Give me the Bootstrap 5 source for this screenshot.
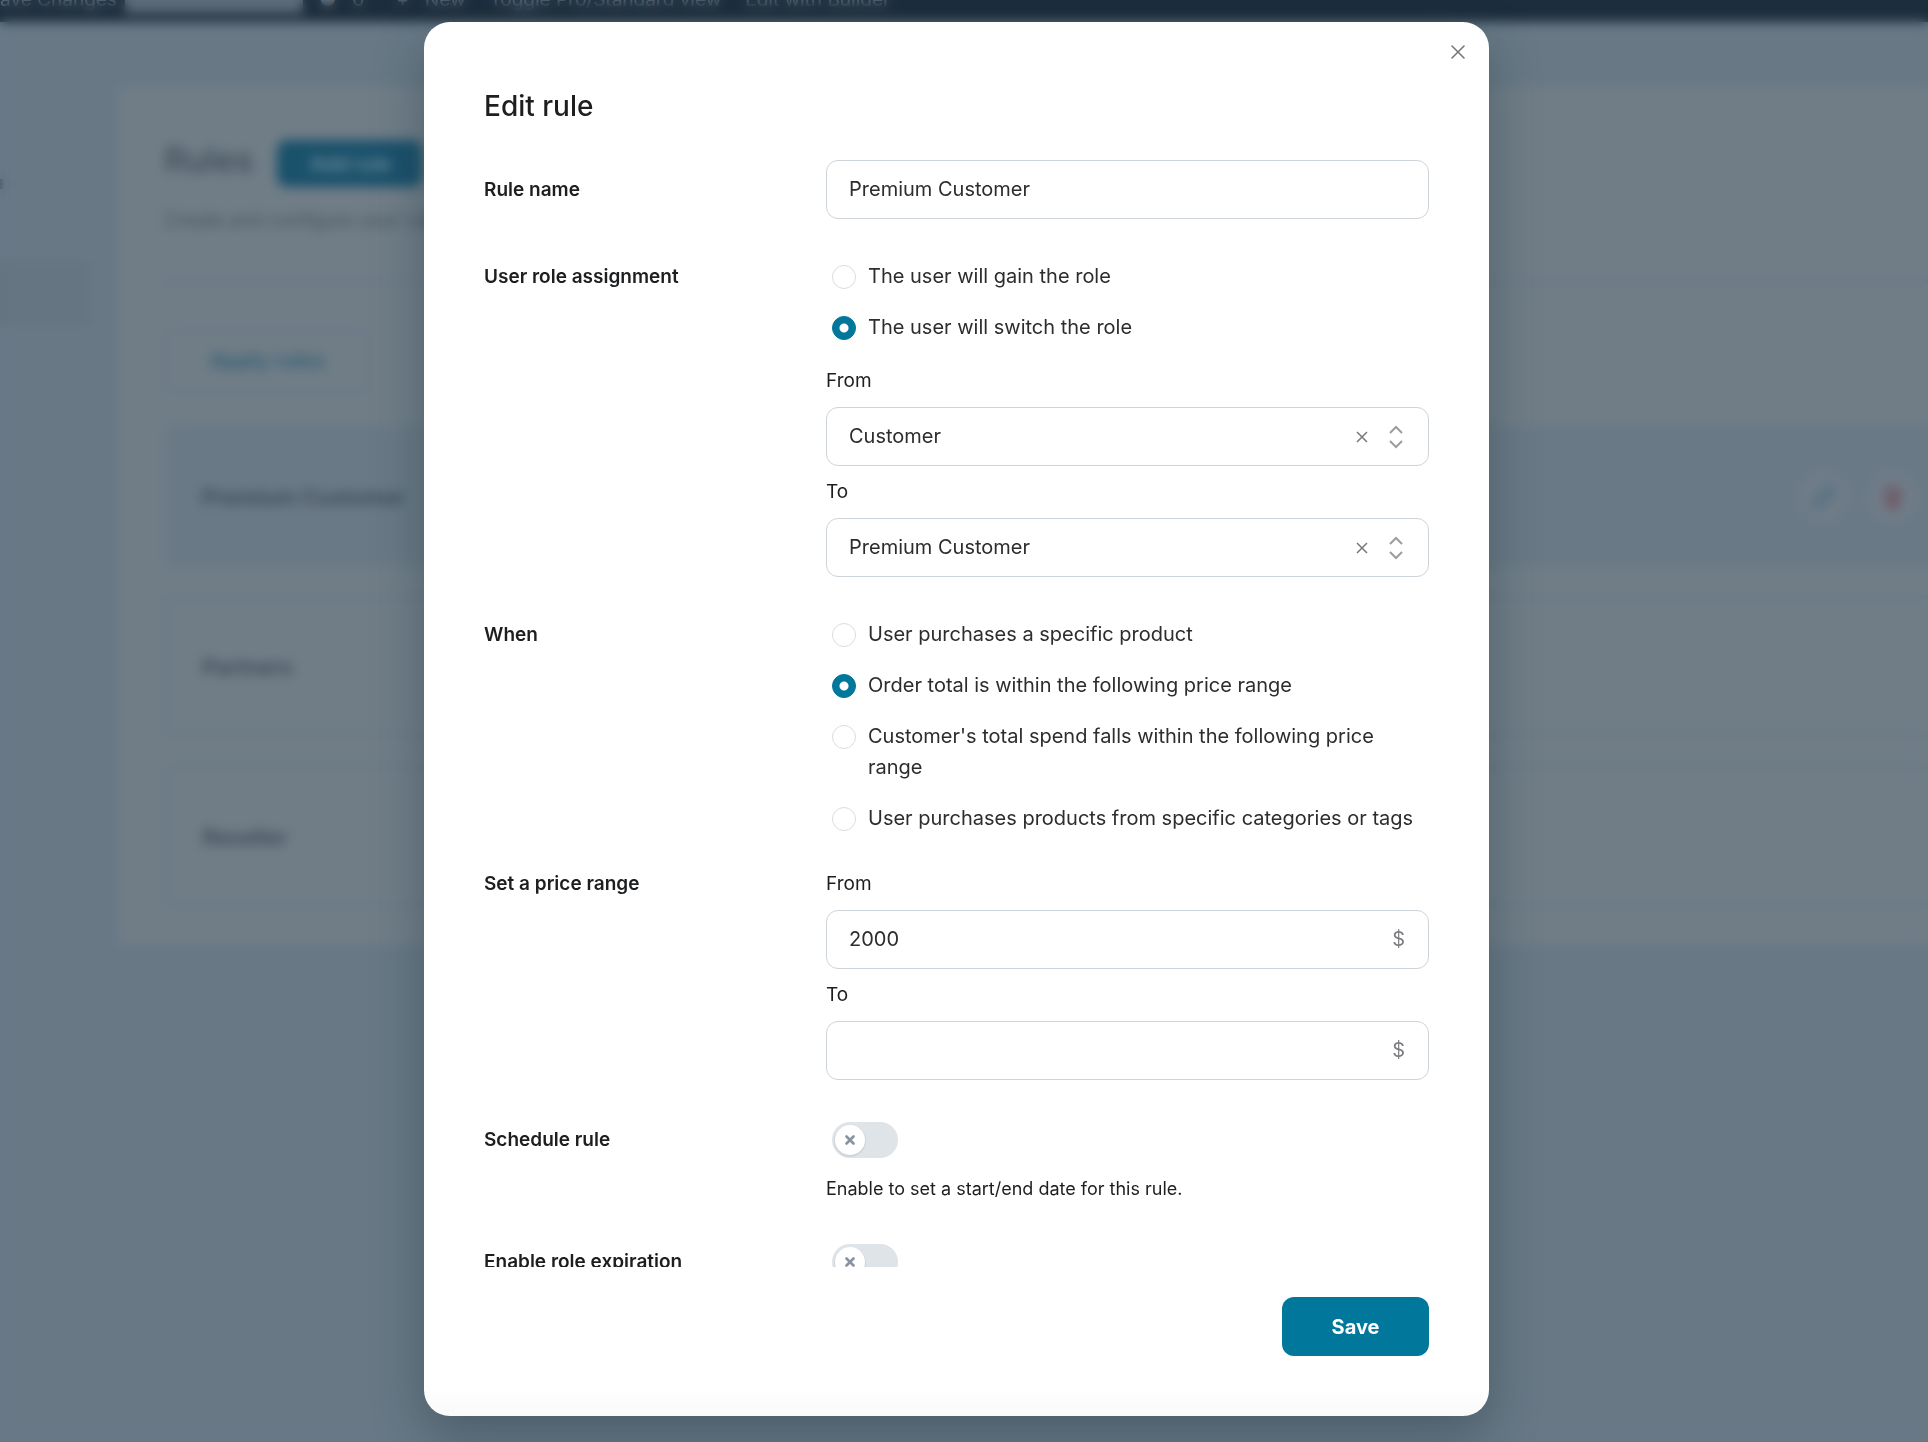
<!DOCTYPE html>
<html lang="en">
<head>
<meta charset="utf-8">
<meta name="viewport" content="width=device-width, initial-scale=1">
<title>Edit rule</title>
<link href="https://cdn.jsdelivr.net/npm/bootstrap@5.3.0/dist/css/bootstrap.min.css" rel="stylesheet">
<style>
  :root { --brand: #00779b; --line: #cdd4d9; --ink: #2c2d2f; --ink-strong: #1d1e20; }
  body { font-family: Inter, "Liberation Sans", sans-serif; font-size: 20px; line-height: 31px; color: var(--ink); background: #687885; }

  /* Page behind the dialog */
  .page { height: 100vh; overflow: hidden; }
  .adminbar { height: 46px; margin-top: -24px; background: #1d2d3c; color: #6b7b88; font-size: 19px; white-space: nowrap; }
  .adminbar .pill { width: 178px; height: 28px; background: #5c6b78; color: #7d8b97; }
  .side { width: 118px; padding-top: 145px; }
  .side .hit { width: 90px; height: 64px; margin-top: 72px; background: #657581; }
  .side .dot { width: 3px; height: 10px; margin-top: 12px; background: #4a5966; }
  .panel { margin-top: 64px; padding: 54px 0 38px 46px; background: #707d87; }
  .panel h1 { font-size: 34px; line-height: 40px; font-weight: 500; color: #3f4d59; }
  .btn-add { width: 146px; height: 47px; background: #1a516b; color: #6b8c9d; font-size: 20px; font-weight: 600; border-radius: 10px; }
  .panel .desc { font-size: 19px; line-height: 28px; color: #465460; }
  .panel .rule-line { height: 4px; margin: 44px 0 46px; background: #6b7986; }
  .btn-apply { width: 206px; height: 64px; border: 3px solid #697a86; color: #345f73; font-size: 21px; font-weight: 600; border-radius: 10px; }
  .rule-card { height: 142px; padding: 2px 8px 0 34px; border: 4px solid #6a7a86; border-right: 0; border-radius: 12px 0 0 12px; color: #3c4955; font-size: 22px; font-weight: 600; }
  .rule-card.on { background: #697985; }
  .rule-card .round { width: 54px; height: 54px; border-radius: 50%; background: #6f7c88; }

  .veil { position: fixed; inset: 0; backdrop-filter: blur(6px); }
  .dialog-area { padding: 22px 15px 26px 0; }
  .dialog-area .modal-dialog { width: 1065px; max-width: 100%; height: 100%; margin: 0 auto; }
  .dialog-area .modal-content { height: 100%; border: 0; border-radius: 26px; color: var(--ink); background: linear-gradient(#fff calc(100% - 30px), #fafafa); box-shadow: 0 20px 50px rgba(30, 55, 65, .4); }
  .modal-header { padding: 66px 60px 36px; border: 0; }
  .modal-title { font-size: 28px; line-height: 36px; font-weight: 500; color: var(--ink-strong); }
  .close-x { position: absolute; top: 16px; right: 17px; width: 28px; height: 28px; }
  .dialog-area .modal-body { padding: 0 60px; overflow-y: auto; scrollbar-width: none; }
  .modal-body::-webkit-scrollbar { display: none; }
  .modal-footer { padding: 30px 60px 60px; border: 0; }
  .modal-footer > * { margin: 0; }

  .form-line { margin-bottom: 42px; }
  .form-line.tight { margin-bottom: 24px; }
  .line-label { flex: 0 0 342px; font-size: 19px; font-weight: 600; color: var(--ink-strong); }
  .line-label.tall { line-height: 59px; }
  .line-label.mid { line-height: 52px; }
  .line-label.sw { line-height: 36px; }
  .sub-label { display: block; font-size: 19px; line-height: 52px; color: var(--ink-strong); }

  .box { height: 59px; padding: 0 20px 0 22px; border: 1px solid var(--line); border-radius: 12px; background: #fff; }
  .box .form-control, .box .form-select { padding: 0; border: 0; box-shadow: none; background: none; font-size: 20px; line-height: 31px; color: var(--ink); }
  .box .unit { padding-right: 3px; color: #7b7d80; }
  .icon-btn { display: flex; align-items: center; justify-content: center; padding: 0; border: 0; background: none; color: #76787b; }
  .box .icon-btn { width: 24px; height: 24px; margin-right: 16px; }
  .box .updown { margin-right: 5px; }

  .opt { display: flex; gap: 12px; padding: 0 0 0 6px; margin: 0 0 20px; min-height: 0; }
  .opt:last-child { margin-bottom: 0; }
  .opt .form-check-input { flex: none; float: none; width: 24px; height: 24px; margin: 4px 0 0; border-color: #dadcde; }
  .opt .form-check-input:checked { background-color: var(--brand); border-color: var(--brand); background-image: radial-gradient(circle, #fff 4px, transparent 5px); }
  .sub-fields { padding-top: 12px; }

  .switch { padding: 0 0 0 6px; margin: 0; min-height: 36px; }
  .form-switch.switch .form-check-input { float: none; display: block; width: 66px; height: 36px; margin: 0; border: 0; border-radius: 18px; background-color: #dfe4e8; background-size: 36px 36px; background-position: left center;
    background-image: url("data:image/svg+xml,%3csvg xmlns='http://www.w3.org/2000/svg' viewBox='0 0 36 36'%3e%3ccircle cx='18' cy='19' r='16' fill='%23d0d6db'/%3e%3ccircle cx='18' cy='18' r='15' fill='%23fff'/%3e%3cpath d='M14.5 14.5l7 7m0-7l-7 7' stroke='%238793a0' stroke-width='2.6' stroke-linecap='round'/%3e%3c/svg%3e"); }
  .help { margin: 18px 0 0; font-size: 18px; line-height: 26px; color: var(--ink-strong); }
  .btn-save { width: 147px; height: 59px; border: 0; border-radius: 12px; background: var(--brand); color: #fff; font-size: 20px; font-weight: 700; }
  .btn-save:hover { background: #00678a; color: #fff; }
</style>
<script src="https://cdn.jsdelivr.net/npm/bootstrap@5.3.0/dist/js/bootstrap.bundle.min.js"></script>
</head>
<body>

<div class="page" aria-hidden="true">
  <div class="adminbar d-flex align-items-center">
    <span>ave Changes</span><span class="pill ms-2"></span>
    <span class="ms-3">●</span><span class="ms-3">0</span><span class="ms-4 ps-2">+</span><span class="ms-3">New</span>
    <span class="ms-4">Toggle Pro/Standard view</span><span class="ms-4">Edit with Builder</span>
  </div>
  <div class="d-flex align-items-start">
    <div class="side flex-shrink-0"><div class="dot"></div><div class="hit"></div></div>
    <main class="panel flex-grow-1">
      <div class="d-flex align-items-start">
        <h1 class="m-0 me-4">Rules</h1>
        <button type="button" class="btn btn-add" tabindex="-1">Add rule</button>
      </div>
      <p class="desc mt-3 pt-1 mb-0">Create and configure your rules</p>
      <div class="rule-line"></div>
      <button type="button" class="btn btn-apply d-block mb-4" tabindex="-1">Apply rules</button>
      <div class="d-flex flex-column gap-4 pt-2">
        <div class="rule-card on d-flex align-items-center mb-1">
          <span class="me-auto">Premium Customer</span>
          <span class="round d-flex align-items-center justify-content-center me-3">
            <svg width="28" height="28" viewBox="0 0 28 28" fill="none" stroke="#587080" stroke-width="5"><path d="M5 23l3-7L20 4l5 5-12 12z"/></svg>
          </span>
          <span class="round d-flex align-items-center justify-content-center">
            <svg width="24" height="28" viewBox="0 0 24 28" fill="#6f5c67"><path d="M2 5h6l1-3h6l1 3h6v3H2zM4 9h16l-1 17H5z"/></svg>
          </span>
        </div>
        <div class="rule-card d-flex align-items-center mb-1">Partners</div>
        <div class="rule-card d-flex align-items-center">Reseller</div>
      </div>
    </main>
  </div>
</div>

<div class="veil"></div>

<div class="modal dialog-area d-block" tabindex="-1" role="dialog" aria-modal="true" aria-labelledby="dlgTitle">
  <div class="modal-dialog">
    <form class="modal-content">
      <div class="modal-header">
        <h2 class="modal-title" id="dlgTitle">Edit rule</h2>
        <button type="button" class="icon-btn close-x" aria-label="Close">
          <svg width="14" height="14" viewBox="0 0 14 14" fill="none" stroke="currentColor" stroke-width="1.6" stroke-linecap="round"><path d="M1 1l12 12M13 1L1 13"/></svg>
        </button>
      </div>

      <div class="modal-body">
        <div class="form-line d-flex">
          <label class="line-label tall" for="ruleName">Rule name</label>
          <div class="box d-flex align-items-center flex-grow-1">
            <input id="ruleName" type="text" class="form-control" value="Premium Customer">
          </div>
        </div>

        <div class="form-line d-flex" role="radiogroup" aria-labelledby="lblRole">
          <div class="line-label" id="lblRole">User role assignment</div>
          <div class="flex-grow-1">
            <div class="form-check opt"><input class="form-check-input" type="radio" name="mode" id="m1"><label for="m1">The user will gain the role</label></div>
            <div class="form-check opt mb-0"><input class="form-check-input" type="radio" name="mode" id="m2" checked><label for="m2">The user will switch the role</label></div>
            <div class="sub-fields">
              <label class="sub-label" for="roleFrom">From</label>
              <div class="box d-flex align-items-center">
                <select id="roleFrom" class="form-select"><option>Customer</option></select>
                <button type="button" class="icon-btn" aria-label="Clear"><svg width="12" height="12" viewBox="0 0 12 12" fill="none" stroke="currentColor" stroke-width="1.5"><path d="M1 1l10 10M11 1L1 11"/></svg></button>
                <svg class="updown flex-shrink-0" width="14" height="24" viewBox="0 0 14 24" fill="none" stroke="#9b9da0" stroke-width="2"><path d="M1 8l6-6 6 6M1 16l6 6 6-6"/></svg>
              </div>
              <label class="sub-label" for="roleTo">To</label>
              <div class="box d-flex align-items-center">
                <select id="roleTo" class="form-select"><option>Premium Customer</option></select>
                <button type="button" class="icon-btn" aria-label="Clear"><svg width="12" height="12" viewBox="0 0 12 12" fill="none" stroke="currentColor" stroke-width="1.5"><path d="M1 1l10 10M11 1L1 11"/></svg></button>
                <svg class="updown flex-shrink-0" width="14" height="24" viewBox="0 0 14 24" fill="none" stroke="#9b9da0" stroke-width="2"><path d="M1 8l6-6 6 6M1 16l6 6 6-6"/></svg>
              </div>
            </div>
          </div>
        </div>

        <div class="form-line tight d-flex" role="radiogroup" aria-labelledby="lblWhen">
          <div class="line-label" id="lblWhen">When</div>
          <div class="flex-grow-1">
            <div class="form-check opt"><input class="form-check-input" type="radio" name="cond" id="c1"><label for="c1">User purchases a specific product</label></div>
            <div class="form-check opt"><input class="form-check-input" type="radio" name="cond" id="c2" checked><label for="c2">Order total is within the following price range</label></div>
            <div class="form-check opt"><input class="form-check-input" type="radio" name="cond" id="c3"><label for="c3">Customer's total spend falls within the following price range</label></div>
            <div class="form-check opt"><input class="form-check-input" type="radio" name="cond" id="c4"><label for="c4">User purchases products from specific categories or tags</label></div>
          </div>
        </div>

        <div class="form-line d-flex">
          <div class="line-label mid">Set a price range</div>
          <div class="flex-grow-1">
            <label class="sub-label" for="priceFrom">From</label>
            <div class="box d-flex align-items-center"><input id="priceFrom" type="text" inputmode="decimal" class="form-control" value="2000"><span class="unit">$</span></div>
            <label class="sub-label" for="priceTo">To</label>
            <div class="box d-flex align-items-center"><input id="priceTo" type="text" inputmode="decimal" class="form-control"><span class="unit">$</span></div>
          </div>
        </div>

        <div class="form-line d-flex">
          <label class="line-label sw" for="swSchedule">Schedule rule</label>
          <div class="flex-grow-1">
            <div class="form-check form-switch switch"><input class="form-check-input" type="checkbox" role="switch" id="swSchedule"></div>
            <p class="help">Enable to set a start/end date for this rule.</p>
          </div>
        </div>

        <div class="form-line d-flex">
          <label class="line-label sw" for="swExpire">Enable role expiration</label>
          <div class="flex-grow-1">
            <div class="form-check form-switch switch"><input class="form-check-input" type="checkbox" role="switch" id="swExpire"></div>
          </div>
        </div>
      </div>

      <div class="modal-footer">
        <button type="submit" class="btn btn-save">Save</button>
      </div>
    </form>
  </div>
</div>
</body>
</html>
